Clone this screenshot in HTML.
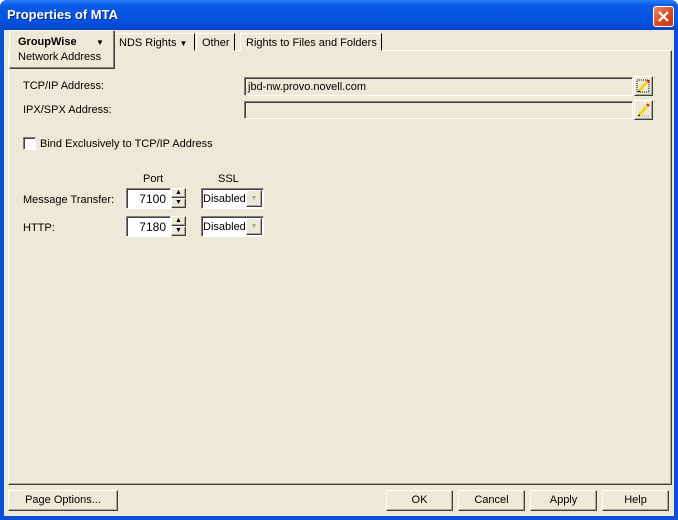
<!DOCTYPE html>
<html><head><style>
*{box-sizing:border-box}
body{margin:0;width:678px;height:520px;overflow:hidden;font:11px "Liberation Sans",sans-serif;color:#000}
.win{position:absolute;left:0;top:0;width:678px;height:520px;background:#0a4fd8;border-radius:7px 7px 0 0}
.title{position:absolute;left:0;top:0;width:678px;height:30px;border-radius:7px 7px 0 0;background:linear-gradient(#2a7cf6,#0859e4 20%,#0553de 70%,#0644c8);}
.title span{position:absolute;left:7px;top:7px;color:#fff;font-weight:bold;font-size:13px;text-shadow:1px 1px #0a2a8a}
.close{position:absolute;left:653px;top:6px;width:21px;height:21px;border:1px solid #fff;border-radius:3px;background:linear-gradient(135deg,#e88a6c,#d9471c 60%,#c0391a)}
.a{position:absolute}
.panel{left:8px;top:50px;width:664px;height:435px;border:1px solid;border-color:#fff #404040 #404040 #fff;box-shadow:inset -1px -1px #aca899}
.tab{top:33px;height:18px;border:1px solid;border-color:#fff #000 transparent #fff;background:#ECE9D8;padding:3px 4px 0 5px;white-space:nowrap}
.lbl{white-space:nowrap}
.inp{border:1px solid;border-color:#808080 #fff #fff #808080;box-shadow:inset 1px 1px #404040;background:#ECE9D8;padding:3px 3px}
.btn{border:1px solid;border-color:#fff #404040 #404040 #fff;box-shadow:inset -1px -1px #aca899;background:#ECE9D8;text-align:center;line-height:18px}
.white{background:#fff}
</style></head><body>
<div class="win">
<div class="title"><span>Properties of MTA</span>
<div class="close"><svg width="19" height="19"><path d="M5 5L14 14M14 5L5 14" stroke="#fff" stroke-width="2.2"/></svg></div></div>
</div>
<div style="position:absolute;left:4px;top:30px;width:670px;height:486px;background:#ECE9D8"></div>
<div class="a panel"></div>
<div class="a tab" style="left:113px;width:82px">NDS Rights <span style="font-size:8px">▼</span></div>
<div class="a tab" style="left:196px;width:39px">Other</div>
<div class="a tab" style="left:240px;width:142px">Rights to Files and Folders</div>
<div class="a" style="left:9px;top:30px;width:105px;height:38px;background:#ECE9D8;border:1px solid;border-color:#fff #808080 #808080 #fff;box-shadow:1px 1px #404040;padding:4px 0 0 8px;line-height:15px">
<b>GroupWise</b><span style="position:absolute;left:86px;top:4px;font-size:8px">▼</span><br>Network Address</div>

<div class="a lbl" style="left:23px;top:80px">TCP/IP Address:</div>
<div class="a lbl" style="left:23px;top:104px">IPX/SPX Address:</div>
<div class="a inp" style="left:244px;top:77px;width:389px;height:19px">jbd-nw.provo.novell.com</div>
<div class="a inp" style="left:244px;top:101px;width:389px;height:18px"></div>
<div class="a btn" style="left:634px;top:76px;width:19px;height:20px"><svg width="17" height="18"><rect x="2" y="3" width="12" height="12" fill="none" stroke="#000" stroke-dasharray="1 1"/><path d="M4 14L13 4" stroke="#e8d820" stroke-width="3"/><path d="M3 15l2-1" stroke="#000"/><path d="M12 3l2 2" stroke="#d02020" stroke-width="2"/></svg></div>
<div class="a btn" style="left:634px;top:100px;width:19px;height:20px"><svg width="17" height="18"><path d="M4 14L13 4" stroke="#e8d820" stroke-width="3"/><path d="M3 15l2-1" stroke="#000"/><path d="M12 3l2 2" stroke="#d02020" stroke-width="2"/><path d="M7 15h8" stroke="#999" stroke-dasharray="1 1"/></svg></div>

<div class="a white" style="left:23px;top:137px;width:13px;height:13px;border:1px solid;border-color:#808080 #fff #fff #808080;box-shadow:inset 1px 1px #404040"></div>
<div class="a lbl" style="left:40px;top:138px">Bind Exclusively to TCP/IP Address</div>

<div class="a lbl" style="left:143px;top:173px">Port</div>
<div class="a lbl" style="left:218px;top:173px">SSL</div>
<div class="a lbl" style="left:23px;top:194px">Message Transfer:</div>
<div class="a lbl" style="left:23px;top:222px">HTTP:</div>

<div class="a inp white" style="left:126px;top:188px;width:45px;height:21px;text-align:right;padding:3px 4px;font-size:12px">7100</div>
<div class="a inp white" style="left:126px;top:216px;width:45px;height:21px;text-align:right;padding:3px 4px;font-size:12px">7180</div>
<div class="a btn" style="left:171px;top:188px;width:15px;height:10px;line-height:8px;font-size:7px">▲</div>
<div class="a btn" style="left:171px;top:198px;width:15px;height:10px;line-height:8px;font-size:7px">▼</div>
<div class="a btn" style="left:171px;top:216px;width:15px;height:10px;line-height:8px;font-size:7px">▲</div>
<div class="a btn" style="left:171px;top:226px;width:15px;height:10px;line-height:8px;font-size:7px">▼</div>

<div class="a inp white" style="left:201px;top:188px;width:63px;height:21px;padding:4px 1px">Disabled</div>
<div class="a btn" style="left:246px;top:190px;width:16px;height:17px;color:#aca899;font-size:7px;line-height:15px">▼</div>
<div class="a inp white" style="left:201px;top:216px;width:63px;height:21px;padding:4px 1px">Disabled</div>
<div class="a btn" style="left:246px;top:218px;width:16px;height:17px;color:#aca899;font-size:7px;line-height:15px">▼</div>

<div class="a btn" style="left:8px;top:490px;width:110px;height:21px">Page Options...</div>
<div class="a btn" style="left:386px;top:490px;width:67px;height:21px">OK</div>
<div class="a btn" style="left:458px;top:490px;width:67px;height:21px">Cancel</div>
<div class="a btn" style="left:530px;top:490px;width:67px;height:21px">Apply</div>
<div class="a btn" style="left:602px;top:490px;width:67px;height:21px">Help</div>
</body></html>
